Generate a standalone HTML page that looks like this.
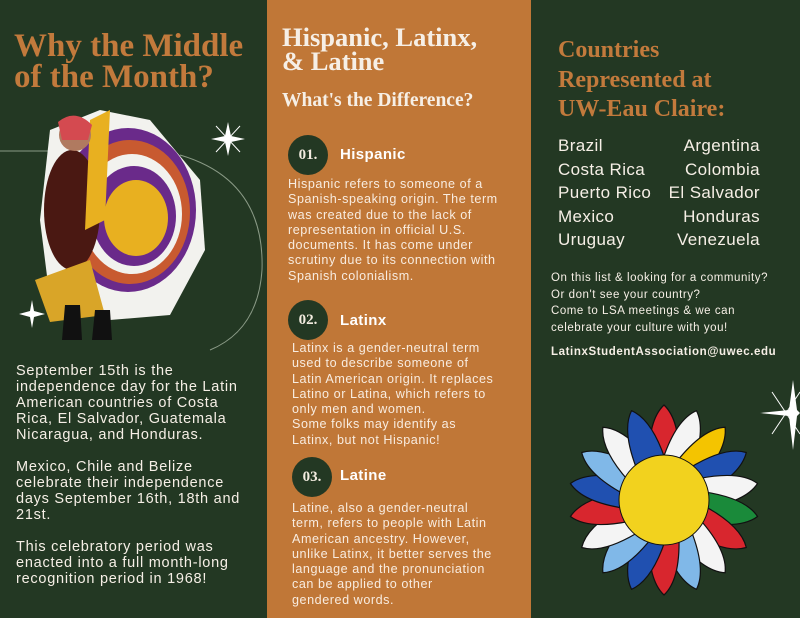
<!DOCTYPE html>
<html><head><meta charset="utf-8"><style>
*{margin:0;padding:0}
body{width:800px;height:618px;position:relative;overflow:hidden;background:#233823;font-family:"Liberation Sans",sans-serif}
.a{position:absolute;white-space:nowrap}
.serif{font-family:"Liberation Serif",serif;font-weight:bold}
.w{color:#f6efe6}
.o{color:#c27a3c}
.mid{position:absolute;left:267px;top:0;width:264px;height:618px;background:#c07737}
.c{position:absolute;width:40px;height:40px;border-radius:50%;background:#233823;color:#f3ece0;font-family:"Liberation Serif",serif;font-size:15px;font-weight:bold;text-align:center;line-height:40px}
.h{font-size:15px;font-weight:bold;color:#fff;letter-spacing:0.4px}
.p{font-size:12.6px;line-height:15.3px;color:#f8ece0;letter-spacing:0.55px}
.lb{font-size:14.5px;line-height:16px;letter-spacing:0.75px}
</style></head><body>
<div class="mid"></div>

<!-- left -->
<div class="a serif o" style="left:14px;top:31px;font-size:33px;line-height:31px">Why the Middle<br>of the Month?</div>
<svg class="a" style="left:0;top:100px" width="266" height="260">
<line x1="0" y1="51" x2="60" y2="51" stroke="#8a9a86" stroke-width="1"/>
<path d="M180 55 Q265 80 262 170 Q258 230 210 250" fill="none" stroke="#8a9a86" stroke-width="1"/>
<g fill="#fff"><path d="M228 22 L231 36 L245 39 L231 42 L228 56 L225 42 L211 39 L225 36Z"/><path d="M32 200 L34 211 L45 214 L34 217 L32 228 L30 217 L19 214 L30 211Z"/></g>
<g stroke="#fff" stroke-width="1"><line x1="216" y1="26" x2="240" y2="52"/><line x1="240" y1="26" x2="216" y2="52"/></g>
<path d="M50 30 L100 10 L150 20 L200 80 L205 150 L170 215 L110 220 L50 200 L40 120Z" fill="#f2f2ee"/>
<ellipse cx="128" cy="110" rx="68" ry="82" fill="#6a2a8a"/>
<ellipse cx="130" cy="112" rx="60" ry="72" fill="#c85a30"/>
<ellipse cx="132" cy="114" rx="50" ry="60" fill="#f2f2ee"/>
<ellipse cx="134" cy="116" rx="42" ry="50" fill="#6a2a8a"/>
<ellipse cx="136" cy="118" rx="32" ry="38" fill="#e8b020"/>
<ellipse cx="72" cy="110" rx="28" ry="60" fill="#4a1812"/>
<path d="M90 20 L110 10 L105 120 L85 130Z" fill="#e8b020"/>
<path d="M35 180 L90 160 L105 215 L50 222Z" fill="#d9a528"/>
<circle cx="75" cy="35" r="16" fill="#b07a60"/>
<path d="M58 22 Q75 8 92 25 L88 40 L62 40Z" fill="#d44a50"/>
<path d="M65 205 L80 205 L82 240 L62 240Z M95 210 L110 210 L112 240 L92 240Z" fill="#111"/>
</svg>
<div class="a w lb" style="left:16px;top:363px">September 15th is the<br>independence day for the Latin<br>American countries of Costa<br>Rica, El Salvador, Guatemala<br>Nicaragua, and Honduras.</div>
<div class="a w lb" style="left:16px;top:459px">Mexico, Chile and Belize<br>celebrate their independence<br>days September 16th, 18th and<br>21st.</div>
<div class="a w lb" style="left:16px;top:539px">This celebratory period was<br>enacted into a full month-long<br>recognition period in 1968!</div>

<!-- middle -->
<div class="a serif w" style="left:282px;top:25px;font-size:26.5px;line-height:24px">Hispanic, Latinx,<br>&amp; Latine</div>
<div class="a serif w" style="left:282px;top:90px;font-size:19.5px">What's the Difference?</div>
<div class="c" style="left:288px;top:135px">01.</div>
<div class="a h" style="left:340px;top:146px">Hispanic</div>
<div class="a p" style="left:288px;top:177px">Hispanic refers to someone of a<br>Spanish-speaking origin. The term<br>was created due to the lack of<br>representation in official U.S.<br>documents. It has come under<br>scrutiny due to its connection with<br>Spanish colonialism.</div>
<div class="c" style="left:288px;top:300px">02.</div>
<div class="a h" style="left:340px;top:312px">Latinx</div>
<div class="a p" style="left:292px;top:341px">Latinx is a gender-neutral term<br>used to describe someone of<br>Latin American origin. It replaces<br>Latino or Latina, which refers to<br>only men and women.<br>Some folks may identify as<br>Latinx, but not Hispanic!</div>
<div class="c" style="left:292px;top:457px">03.</div>
<div class="a h" style="left:340px;top:467px">Latine</div>
<div class="a p" style="left:292px;top:501px">Latine, also a gender-neutral<br>term, refers to people with Latin<br>American ancestry. However,<br>unlike Latinx, it better serves the<br>language and the pronunciation<br>can be applied to other<br>gendered words.</div>

<!-- right -->
<div class="a serif o" style="left:558px;top:36px;font-size:24px;line-height:29.5px">Countries<br>Represented at<br>UW-Eau Claire:</div>
<div class="a w" style="left:558px;top:134px;font-size:17px;line-height:23.5px;letter-spacing:0.4px">Brazil<br>Costa Rica<br>Puerto Rico<br>Mexico<br>Uruguay</div>
<div class="a w" style="left:640px;top:134px;width:120px;text-align:right;font-size:17px;line-height:23.5px;letter-spacing:0.4px">Argentina<br>Colombia<br>El Salvador<br>Honduras<br>Venezuela</div>
<div class="a w" style="left:551px;top:270px;font-size:11.5px;line-height:16.5px;letter-spacing:0.55px">On this list &amp; looking for a community?<br>Or don't see your country?<br>Come to LSA meetings &amp; we can<br>celebrate your culture with you!</div>
<div class="a w" style="left:551px;top:346px;font-size:11.5px;font-weight:bold;letter-spacing:0.6px">LatinxStudentAssociation@uwec.edu</div>
<svg class="a" style="left:560px;top:380px" width="240" height="238">
<g fill="#fff"><path d="M233 0 L237 30 L240 33 L237 36 L233 70 L229 36 L200 33 L229 30Z"/></g>
<g stroke="#fff" stroke-width="1"><line x1="212" y1="12" x2="240" y2="54"/><line x1="240" y1="12" x2="212" y2="54"/></g>
<g transform="translate(104,120)">
<g stroke="#111" stroke-width="1.2">
<path d="M-15 -38 Q-16 -80 0 -95 Q16 -80 15 -38Z" fill="#d8262e"/>
<path d="M-15 -38 Q-16 -80 0 -95 Q16 -80 15 -38Z" fill="#f4f4f4" transform="rotate(20)"/>
<path d="M-15 -38 Q-16 -80 0 -95 Q16 -80 15 -38Z" fill="#f4c400" transform="rotate(40)"/>
<path d="M-15 -38 Q-16 -80 0 -95 Q16 -80 15 -38Z" fill="#2050b0" transform="rotate(60)"/>
<path d="M-15 -38 Q-16 -80 0 -95 Q16 -80 15 -38Z" fill="#f4f4f4" transform="rotate(80)"/>
<path d="M-15 -38 Q-16 -80 0 -95 Q16 -80 15 -38Z" fill="#1a8a3a" transform="rotate(100)"/>
<path d="M-15 -38 Q-16 -80 0 -95 Q16 -80 15 -38Z" fill="#d8262e" transform="rotate(120)"/>
<path d="M-15 -38 Q-16 -80 0 -95 Q16 -80 15 -38Z" fill="#f4f4f4" transform="rotate(140)"/>
<path d="M-15 -38 Q-16 -80 0 -95 Q16 -80 15 -38Z" fill="#80b8e8" transform="rotate(160)"/>
<path d="M-15 -38 Q-16 -80 0 -95 Q16 -80 15 -38Z" fill="#d8262e" transform="rotate(180)"/>
<path d="M-15 -38 Q-16 -80 0 -95 Q16 -80 15 -38Z" fill="#2050b0" transform="rotate(200)"/>
<path d="M-15 -38 Q-16 -80 0 -95 Q16 -80 15 -38Z" fill="#80b8e8" transform="rotate(220)"/>
<path d="M-15 -38 Q-16 -80 0 -95 Q16 -80 15 -38Z" fill="#f4f4f4" transform="rotate(240)"/>
<path d="M-15 -38 Q-16 -80 0 -95 Q16 -80 15 -38Z" fill="#d8262e" transform="rotate(260)"/>
<path d="M-15 -38 Q-16 -80 0 -95 Q16 -80 15 -38Z" fill="#2050b0" transform="rotate(280)"/>
<path d="M-15 -38 Q-16 -80 0 -95 Q16 -80 15 -38Z" fill="#80b8e8" transform="rotate(300)"/>
<path d="M-15 -38 Q-16 -80 0 -95 Q16 -80 15 -38Z" fill="#f4f4f4" transform="rotate(320)"/>
<path d="M-15 -38 Q-16 -80 0 -95 Q16 -80 15 -38Z" fill="#2050b0" transform="rotate(340)"/>
</g>
<circle r="45" fill="#f2d21e" stroke="#111" stroke-width="1"/>
</g>
</svg>
</body></html>
